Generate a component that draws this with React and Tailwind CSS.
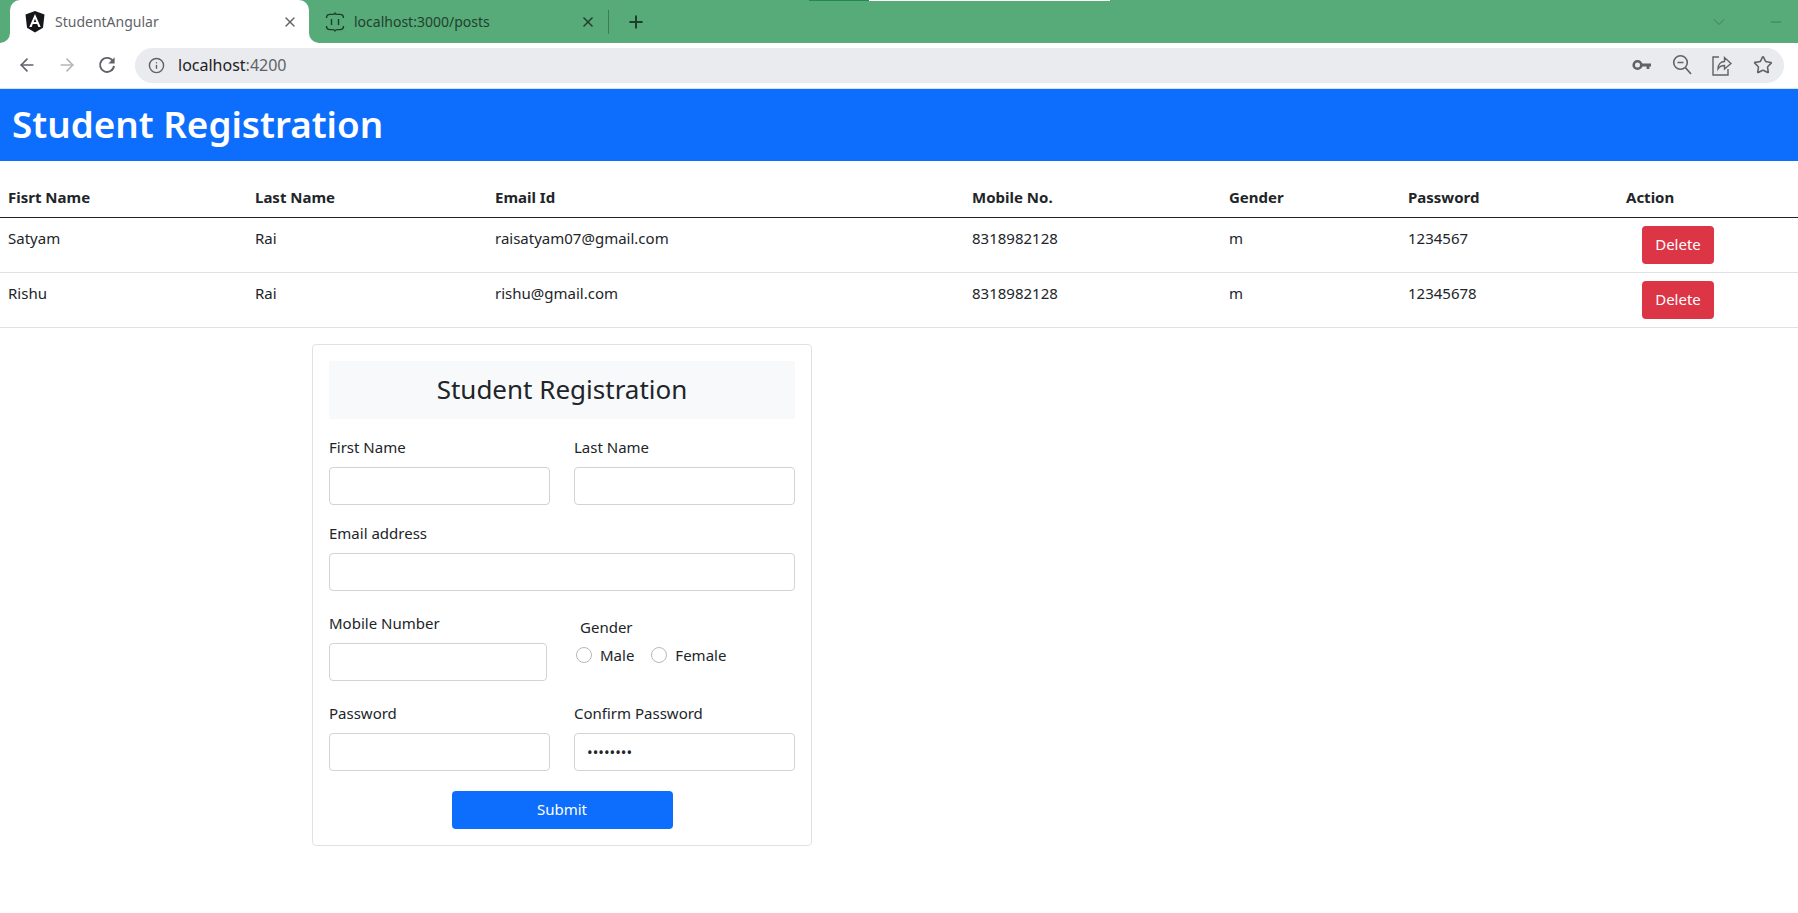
import { ArrowLeft, ArrowRight, Info, X, Plus, Star, ChevronDown, Minus } from 'lucide-react'

const font_ui = "font-['Noto_Sans',sans-serif]"

const students = [
  { first: 'Satyam', last: 'Rai', email: 'raisatyam07@gmail.com', mobile: '8318982128', gender: 'm', password: '1234567' },
  { first: 'Rishu', last: 'Rai', email: 'rishu@gmail.com', mobile: '8318982128', gender: 'm', password: '12345678' },
]

function AngularLogo() {
  return (
    <svg width="20" height="22" viewBox="0 0 20 22" className="flex-shrink-0">
      <path d="M10 0 L19.5 3.4 L18 16.8 L10 21.5 L2 16.8 L0.5 3.4 Z" fill="#15171a" />
      <path d="M10 3 L4.3 16 H6.6 L7.8 13 H12.2 L13.4 16 H15.7 Z M8.7 11 L10 7.7 L11.3 11 Z" fill="#fff" fillRule="evenodd" />
    </svg>
  )
}

function ServerIcon() {
  return (
    <svg width="20" height="20" viewBox="0 0 20 20" fill="none" stroke="#1f3d2c" strokeWidth="1.4" className="flex-shrink-0">
      <path d="M1.5 6 C1.5 3 3 2.4 5 2.4 H8 C9 2.4 9.6 2 10 1.2 C10.4 2 11 2.4 12 2.4 H15 C17 2.4 18.5 3 18.5 6" />
      <path d="M1.5 14 C1.5 17 3 17.6 5 17.6 H8 C9 17.6 9.6 18 10 18.8 C10.4 18 11 17.6 12 17.6 H15 C17 17.6 18.5 17 18.5 14" />
      <path d="M6.5 7 V13 M13.5 7 V13" />
    </svg>
  )
}

function ReloadIcon() {
  return (
    <svg width="20" height="20" viewBox="0 0 20 20" fill="none">
      <path d="M15.6 5.6 A7 7 0 1 0 17 11" stroke="#5f6368" strokeWidth="1.9" />
      <path d="M17.6 2.2 V8.4 H11.4 Z" fill="#5f6368" />
    </svg>
  )
}

function KeyIcon() {
  return (
    <svg width="20" height="12" viewBox="0 0 20 12" fill="none">
      <circle cx="5.5" cy="6" r="3.8" stroke="#5f6368" strokeWidth="2.6" />
      <path d="M9 4.6 H19 V7.4 H17.4 V10 H14.6 V7.4 H9 Z" fill="#5f6368" />
    </svg>
  )
}

function ZoomOutIcon() {
  return (
    <svg width="20" height="22" viewBox="0 0 20 22" fill="none" stroke="#5f6368" strokeWidth="1.6">
      <circle cx="8.5" cy="8.5" r="6.8" />
      <path d="M5.5 8.5 H11.5 M13.4 13.6 L19 20" />
    </svg>
  )
}

function ShareIcon() {
  return (
    <svg width="20" height="22" viewBox="0 0 20 22" fill="none" stroke="#5f6368" strokeWidth="1.4">
      <path d="M7 3 H1 V21 H16 V15" />
      <path d="M6 15 C6 10 9 7.5 12.5 7.5 V3.5 L19 9.5 L12.5 15 V11.5 C10 11.5 7.5 12.5 6 15 Z" />
    </svg>
  )
}

function Field({ label, value, type = 'text', className = '' }) {
  return (
    <div>
      <label className="block mb-2 leading-6">{label}</label>
      <input
        type={type}
        defaultValue={value}
        className={`block h-[38px] px-3 bg-white border border-[#ced4da] rounded-[4px] text-[#212529] ${className || 'w-full'}`}
      />
    </div>
  )
}

function Radio({ label }) {
  return (
    <label className="flex items-center gap-[8px] leading-6">
      <input type="radio" name="gender" className="appearance-none w-4 h-4 rounded-full border border-[#b8b8b8] bg-white" />
      {label}
    </label>
  )
}

export default function App() {
  return (
    <div className={`min-h-[913px] bg-white text-[#212529] text-[15px] ${font_ui}`}>

      {/* Tab strip */}
      <div className="relative flex h-[43px] bg-[#56ab78]">
        <div className="w-[10px] bg-white">
          <div className="h-full bg-[#56ab78] rounded-br-[10px]"></div>
        </div>
        <div className="flex items-center w-[299px] pl-[15px] pr-[11px] bg-white rounded-t-[10px]">
          <AngularLogo />
          <span className="ml-[10px] flex-1 text-[14px] text-[#5f6368]">StudentAngular</span>
          <X size={16} color="#5f6368" strokeWidth={2} />
        </div>
        <div className="flex-1 bg-white">
          <div className="flex items-center h-full pl-4 bg-[#56ab78] rounded-bl-[10px]">
            <ServerIcon />
            <span className="ml-[9px] w-[226px] text-[14px] text-[#24402f]">localhost:3000/posts</span>
            <X size={16} color="#24402f" strokeWidth={2.4} />
            <div className="ml-[12px] w-px h-6 bg-[#3d7a56]"></div>
            <Plus size={20} color="#1f3d2c" strokeWidth={2.4} className="ml-[17px]" />
            <div className="flex-1"></div>
            <ChevronDown size={20} color="#3d7a56" strokeWidth={1} className="mr-[39px]" />
            <Minus size={16} color="#2f6a48" strokeWidth={1} className="mr-[14px]" />
          </div>
        </div>
        {/* thin loading stripe on the top edge */}
        <div className="absolute top-0 left-[809px] flex h-px">
          <div className="w-[60px] bg-[#1f8a4c]"></div>
          <div className="w-[241px] bg-white"></div>
        </div>
      </div>

      {/* Address bar */}
      <div className="flex items-center h-[46px] pb-px bg-white border-b border-[#cfe3f5]">
        <ArrowLeft size={20} color="#5f6368" strokeWidth={2} className="ml-[17px]" />
        <ArrowRight size={20} color="#b4b6b9" strokeWidth={2} className="ml-[20px]" />
        <div className="ml-[20px]"><ReloadIcon /></div>
        <div className="flex items-center flex-1 h-[35px] ml-[18px] mr-[14px] bg-[#e9ebee] rounded-full">
          <Info size={17} color="#5f6368" strokeWidth={2} className="ml-[13px]" />
          <span className="ml-[13px] text-[16px] text-[#202124]">localhost<span className="text-[#5f6368]">:4200</span></span>
          <div className="flex-1"></div>
          <KeyIcon />
          <div className="ml-[20px]"><ZoomOutIcon /></div>
          <div className="ml-[20px]"><ShareIcon /></div>
          <Star size={20} color="#5f6368" strokeWidth={1.9} className="ml-[21px] mr-[11px]" />
        </div>
      </div>

      {/* Page header */}
      <div className="flex items-center h-[72px] pl-3 bg-[#0d6efd]">
        <h1 className="text-[36.8px] font-semibold text-white">Student Registration</h1>
      </div>

      {/* Student table */}
      <table className="w-full mt-4 table-fixed border-collapse">
        <colgroup>
          <col className="w-[247px]" />
          <col className="w-[240px]" />
          <col className="w-[477px]" />
          <col className="w-[257px]" />
          <col className="w-[179px]" />
          <col className="w-[218px]" />
          <col className="w-[180px]" />
        </colgroup>
        <thead>
          <tr className="border-b border-[#212529]">
            {['Fisrt Name', 'Last Name', 'Email Id', 'Mobile No.', 'Gender', 'Password', 'Action'].map((title) => (
              <th key={title} className="h-10 pl-2 text-left font-bold">{title}</th>
            ))}
          </tr>
        </thead>
        <tbody>
          {students.map((s) => (
            <tr key={s.first} className="border-b border-[#dee2e6]">
              <td className="pl-2 py-2 align-top leading-6">{s.first}</td>
              <td className="pl-2 py-2 align-top leading-6">{s.last}</td>
              <td className="pl-2 py-2 align-top leading-6">{s.email}</td>
              <td className="pl-2 py-2 align-top leading-6">{s.mobile}</td>
              <td className="pl-2 py-2 align-top leading-6">{s.gender}</td>
              <td className="pl-2 py-2 align-top leading-6">{s.password}</td>
              <td className="pl-2 py-2 align-top">
                <button className="block w-[72px] h-[38px] ml-[16px] bg-[#dc3545] rounded-[4px] text-white">Delete</button>
              </td>
            </tr>
          ))}
        </tbody>
      </table>

      {/* Registration form */}
      <div className="w-[500px] ml-[312px] mt-4 p-4 border border-[#dee2e6] rounded-[4px]">
        <h2 className="flex items-center justify-center h-[58px] bg-[#f8f9fa] text-[26px]">Student Registration</h2>

        <div className="grid grid-cols-2 gap-x-6 mt-4">
          <Field label="First Name" />
          <Field label="Last Name" />
        </div>

        <div className="mt-4">
          <Field label="Email address" />
        </div>

        <div className="grid grid-cols-2 gap-x-6 mt-5">
          <Field label="Mobile Number" className="w-[218px]" />
          <div className="pt-1">
            <div className="pl-[6px] leading-6">Gender</div>
            <div className="flex gap-[17px] mt-1 pl-[2px]">
              <Radio label="Male" />
              <Radio label="Female" />
            </div>
          </div>
        </div>

        <div className="grid grid-cols-2 gap-x-6 mt-5">
          <Field label="Password" />
          <Field label="Confirm Password" type="password" value="12345678" />
        </div>

        <div className="flex justify-center mt-5">
          <button className="w-[221px] h-[38px] bg-[#0d6efd] rounded-[4px] text-white">Submit</button>
        </div>
      </div>

    </div>
  )
}
